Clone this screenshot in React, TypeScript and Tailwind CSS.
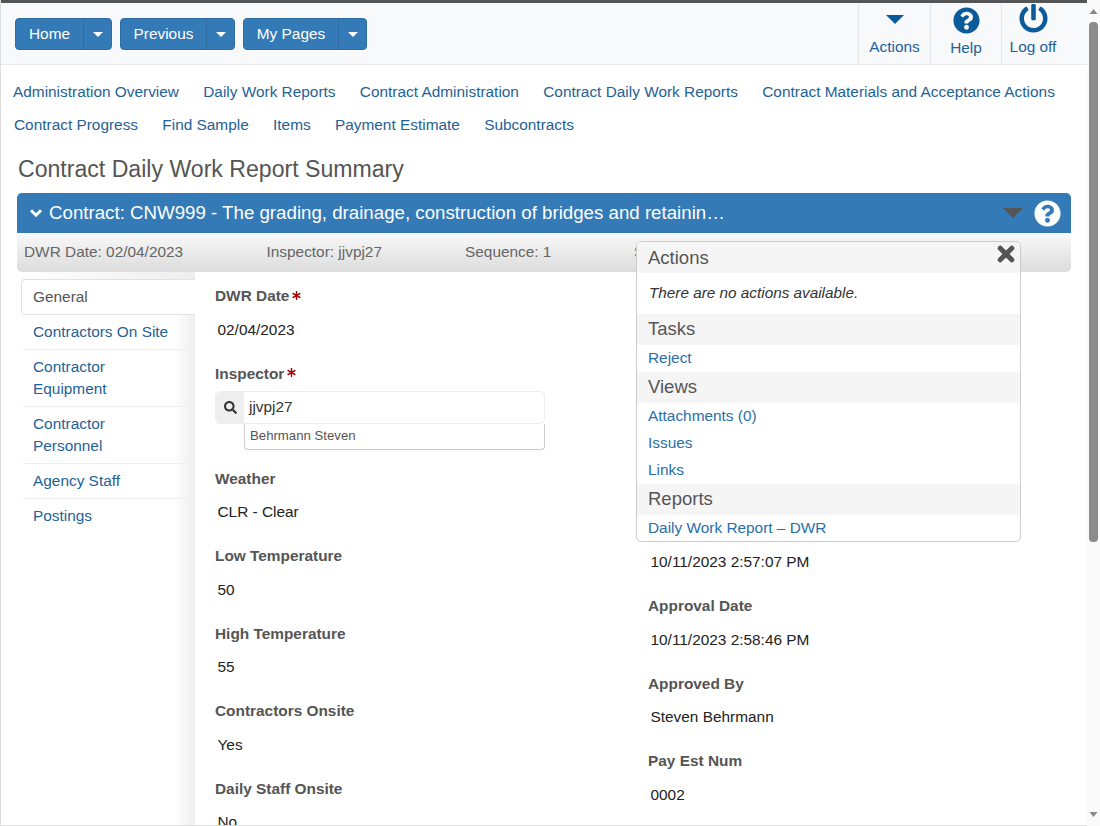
import React from 'react';
import { FaAsterisk, FaPowerOff, FaQuestionCircle, FaSearch } from 'react-icons/fa';

const SplitButton = ({ label, mainWidth }: { label: string; mainWidth: string }) => (
  <div className="flex h-8 rounded-[4px] border border-[#2e6da4] bg-[#337ab7] text-white">
    <span className={`flex items-center justify-center border-r border-[#2e6da4] text-[15.4px] ${mainWidth}`}>{label}</span>
    <span className="flex w-[27px] items-center justify-center">
      <span className="h-0 w-0 border-x-[5px] border-t-[5px] border-x-transparent border-t-white" />
    </span>
  </div>
);

const Field = ({ label, value, required }: { label: string; value: string; required?: boolean }) => (
  <div className="h-[77.6px]">
    <div className="flex h-[20px] items-center gap-[3px] text-[15.4px] leading-5 font-bold text-[#555]">
      {label}
      {required && <FaAsterisk className="mb-[2px] text-[9px] text-[#a00000]" />}
    </div>
    <div className="mt-[13.5px] pl-[2.5px] text-[15.4px] leading-5 text-[#222]">{value}</div>
  </div>
);

const PopupHeading = ({ children }: { children: React.ReactNode }) => (
  <div className="flex h-[31px] items-center bg-[#f5f5f5] pb-[2px] pl-[11px] text-[18.5px] text-[#555]">{children}</div>
);

const PopupLink = ({ children }: { children: React.ReactNode }) => (
  <div className="flex h-[27px] items-center pb-[2px] pl-[11px] text-[15.4px] text-[#2a6fa8]">{children}</div>
);

const sideItems = [['Contractors On Site'], ['Contractor', 'Equipment'], ['Contractor', 'Personnel'], ['Agency Staff'], ['Postings']];

export default function App() {
  return (
    <div className="flex h-[826px] w-[1100px] overflow-hidden bg-white font-['Liberation_Sans',Arial,sans-serif]">
      <div className="relative h-[826px] w-[1087px] overflow-hidden border-b border-l border-[#dddddd]">
        <div className="h-[3px] bg-[#555]" />
        <header className="flex h-[62px] justify-between border-b border-[#e7e7e7] bg-[#f8f9fb]">
          <div className="flex gap-2 pt-[15px] pl-[14px]">
            <SplitButton label="Home" mainWidth="w-[68px]" />
            <SplitButton label="Previous" mainWidth="w-[86px]" />
            <SplitButton label="My Pages" mainWidth="w-[95px]" />
          </div>
          <div className="flex text-[15.4px] text-[#23609a]">
            <div className="flex w-[72px] flex-col items-center border-l border-[#e7e7e7] pt-[12px]">
              <span className="h-0 w-0 border-x-[9px] border-t-[9px] border-x-transparent border-t-[#0b5a9a]" />
              <span className="mt-[13px] leading-5">Actions</span>
            </div>
            <div className="flex w-[71px] flex-col items-center border-l border-[#e7e7e7] pt-[4px]">
              <FaQuestionCircle className="text-[27px] text-[#0b5a9a]" />
              <span className="mt-[4px] leading-5">Help</span>
            </div>
            <div className="flex w-[86px] flex-col items-center border-l border-[#e7e7e7] pt-[1px] pr-[23px]">
              <FaPowerOff className="text-[29px] text-[#0b5a9a]" />
              <span className="mt-[4px] leading-5">Log off</span>
            </div>
          </div>
        </header>

        <nav className="text-[15.4px] leading-5 text-[#1f6296]">
          <div className="flex gap-[24.3px] pt-[17px] pl-[12px]">
            <span>Administration Overview</span>
            <span>Daily Work Reports</span>
            <span>Contract Administration</span>
            <span>Contract Daily Work Reports</span>
            <span>Contract Materials and Acceptance Actions</span>
          </div>
          <div className="flex gap-[24.3px] pt-[13px] pl-[13px]">
            <span>Contract Progress</span>
            <span>Find Sample</span>
            <span>Items</span>
            <span>Payment Estimate</span>
            <span>Subcontracts</span>
          </div>
        </nav>

        <h1 className="mt-[17px] ml-[17px] text-[23.1px] leading-[34px] text-[#555]">Contract Daily Work Report Summary</h1>

        <div className="mx-[16px] mt-[7px] w-[1054px]">
          <div className="flex h-[40px] items-center rounded-t-[5px] bg-[#337ab7] pr-[10px] pl-[12px] text-white">
            <svg viewBox="0 0 14 10" className="h-[10px] w-[14px] shrink-0">
              <path d="M2 2.2 7 7.2l5-5" fill="none" stroke="#fff" strokeWidth="3" />
            </svg>
            <span className="ml-[6px] flex-1 text-[18.7px]">Contract: CNW999 - The grading, drainage, construction of bridges and retainin…</span>
            <span className="mr-[11px] h-0 w-0 border-x-[10px] border-t-[10px] border-x-transparent border-t-[#555]" />
            <FaQuestionCircle className="text-[27px]" />
          </div>
          <div className="flex h-[39px] items-center rounded-b-[5px] bg-gradient-to-b from-[#f9f9f9] to-[#dcdcdc] pb-[2px] pl-[7px] text-[15.4px] text-[#666]">
            <span className="w-[242.5px]">DWR Date: 02/04/2023</span>
            <span className="w-[198.5px]">Inspector: jjvpj27</span>
            <span className="w-[169px]">Sequence: 1</span>
            <span>S</span>
          </div>
        </div>

        <div className="flex">
          <aside className="ml-[20px] h-[600px] w-[174px] text-[15.4px] leading-[22px] text-[#1f6296]">
            <div className="h-[7px] bg-gradient-to-r from-white to-[#eeeeee]" />
            <div className="flex h-[36px] items-center rounded-l-[4px] border border-r-0 border-[#e2e2e2] bg-white pl-[11px] text-[#555]">General</div>
            <div className="h-full bg-gradient-to-r from-white from-[88%] to-[#eeeeee] pr-[7px] pl-[2px]">
              {sideItems.map((lines) => (
                <div key={lines[0] + lines[1]} className="border-b border-[#eeeeee] py-[6px] pl-[10px] last:border-b-0">
                  {lines.map((line) => (
                    <div key={line}>{line}</div>
                  ))}
                </div>
              ))}
            </div>
          </aside>

          <main className="ml-[20px] w-[330px] pt-[14px]">
            <Field label="DWR Date" value="02/04/2023" required />
            <div className="h-[105px]">
              <div className="flex h-[20px] items-center gap-[3px] text-[15.4px] font-bold text-[#555]">
                Inspector
                <FaAsterisk className="mb-[2px] text-[9px] text-[#a00000]" />
              </div>
              <div className="mt-[7px] flex h-[33px] rounded-[5px] border border-[#eeeeee]">
                <span className="flex w-[28px] items-center justify-center rounded-l-[5px] bg-[#eeeeee] text-[13px] text-[#333]">
                  <FaSearch />
                </span>
                <span className="flex items-center pb-[2px] pl-[5px] text-[15.4px] text-[#333]">jjvpj27</span>
              </div>
              <div className="ml-[29px] flex h-[26px] items-center rounded-b-[4px] border border-t-0 border-[#cccccc] pl-[5px] text-[13.2px] text-[#555]">Behrmann Steven</div>
            </div>
            <Field label="Weather" value="CLR - Clear" />
            <Field label="Low Temperature" value="50" />
            <Field label="High Temperature" value="55" />
            <Field label="Contractors Onsite" value="Yes" />
            <Field label="Daily Staff Onsite" value="No" />
          </main>

          <section className="ml-[103px] w-[300px] pt-[280px]">
            <div className="h-[44px] pl-[2.5px] text-[15.4px] leading-5 text-[#222]">10/11/2023 2:57:07 PM</div>
            <Field label="Approval Date" value="10/11/2023 2:58:46 PM" />
            <Field label="Approved By" value="Steven Behrmann" />
            <Field label="Pay Est Num" value="0002" />
          </section>
        </div>

        <div className="absolute top-[241px] left-[635px] h-[301px] w-[385px] overflow-hidden rounded-[5px] border border-[#cccccc] bg-white">
          <div className="relative flex h-[31px] items-center bg-[#f5f5f5] pl-[11px] text-[18.5px] text-[#555]">
            Actions
            <svg viewBox="0 0 18 18" className="absolute top-[3px] right-[5px] h-[18px] w-[18px]">
              <path d="M3.2 3.2 14.8 14.8M14.8 3.2 3.2 14.8" stroke="#555" strokeWidth="5" strokeLinecap="round" />
            </svg>
          </div>
          <div className="flex h-[41px] items-center pb-[1px] pl-[12px] text-[15.3px] text-[#333] italic">There are no actions available.</div>
          <PopupHeading>Tasks</PopupHeading>
          <PopupLink>Reject</PopupLink>
          <PopupHeading>Views</PopupHeading>
          <PopupLink>Attachments (0)</PopupLink>
          <PopupLink>Issues</PopupLink>
          <PopupLink>Links</PopupLink>
          <PopupHeading>Reports</PopupHeading>
          <PopupLink>Daily Work Report – DWR</PopupLink>
        </div>
      </div>

      <div className="flex h-[826px] w-[13px] flex-col items-center bg-[#fafafa]">
        <svg width="13" height="22" viewBox="0 0 13 22" className="shrink-0"><path d="M2.5 14 6.5 9l4 5z" fill="#8a8a8a" /></svg>
        <div className="h-[520px] w-[9px] shrink-0 rounded-[4px] bg-[#8c8c8c]" />
        <div className="flex-1" />
        <svg width="13" height="22" viewBox="0 0 13 22" className="shrink-0"><path d="M2.5 8 6.5 13l4-5z" fill="#8a8a8a" /></svg>
      </div>
    </div>
  );
}
